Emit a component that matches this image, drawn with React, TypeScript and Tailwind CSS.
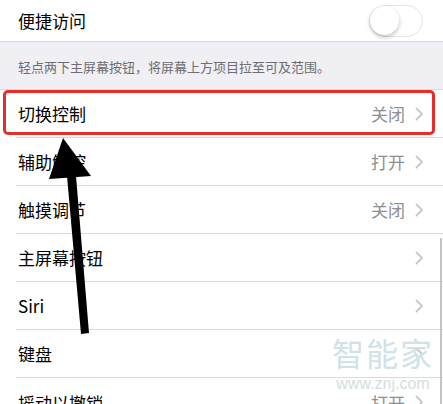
import React from "react";

const Chevron = () => (
  <svg width="9" height="14" viewBox="0 0 9 14" className="ml-[10px]">
    <path d="M1.5 1.5 L7 7 L1.5 12.5" fill="none" stroke="#c7c7cc" strokeWidth="1.8" strokeLinecap="round" strokeLinejoin="round" />
  </svg>
);

const rows: { label: string; value?: string }[] = [
  { label: "切换控制", value: "关闭" },
  { label: "辅助触控", value: "打开" },
  { label: "触摸调节", value: "关闭" },
  { label: "主屏幕按钮" },
  { label: "Siri" },
  { label: "键盘" },
  { label: "摇动以撤销", value: "打开" },
];

export default function App() {
  return (
    <div
      className="relative w-[443px] h-[404px] overflow-hidden bg-[#efeff4]"
      style={{ fontFamily: '"Noto Sans CJK SC", "Noto Sans", sans-serif' }}
    >
      <div className="h-[42px] bg-white flex items-center justify-between pl-[18px] pr-[20px] border-b border-[#d9d9de]">
        <span className="text-[17px] text-black leading-none">便捷访问</span>
        <div className="w-[54px] h-[32px] rounded-full border-[1.5px] border-[#e4e4e6] bg-white relative">
          <div className="absolute left-0 top-0 w-[29px] h-[29px] rounded-full bg-white shadow-[0_2px_4px_rgba(0,0,0,0.25)]" />
        </div>
      </div>
      <div className="h-[47px] pl-[18px] pt-[11px]">
        <span className="text-[13px] text-[#6d6d72] leading-none">轻点两下主屏幕按钮，将屏幕上方项目拉至可及范围。</span>
      </div>
      <div className="bg-white border-t border-[#d9d9de]">
        {rows.map((r, i) => (
          <div key={i} className="pl-[16px]">
            <div className={`h-[48px] flex items-center justify-between pl-[2px] pr-[19px] ${i < rows.length - 1 ? "border-b border-[#d9d9de]" : ""}`}>
              <span className="text-[17px] text-black leading-none">{r.label}</span>
              <div className="flex items-center">
                {r.value && <span className="text-[17px] text-[#8e8e93] leading-none">{r.value}</span>}
                <Chevron />
              </div>
            </div>
          </div>
        ))}
      </div>

      {/* red annotation box */}
      <div className="absolute left-[3px] top-[90px] w-[432px] h-[45px] border-[3px] border-[#e52e2b] rounded-[5px]" />

      {/* scrollbar */}
      <div className="absolute left-[440px] top-[238px] w-[2px] h-[170px] bg-[#c4c4c4]" />

      {/* watermark */}
      <div className="absolute left-[332px] top-[336px] w-[102px] flex flex-col items-center">
        <span className="text-[32px] leading-none tracking-[2px] text-[#cfe2e7]">智能家</span>
        <span className="text-[16px] leading-none mt-[8px] text-[#d4dde0]" style={{ fontFamily: '"Liberation Sans", sans-serif' }}>www.znj.com</span>
      </div>

      {/* arrow */}
      <svg className="absolute left-0 top-0" width="443" height="404" viewBox="0 0 443 404">
        <polygon points="63,138 49,179 91,176" fill="#000" />
        <polygon points="67,176 76,176 89,333 81,334" fill="#000" />
      </svg>
    </div>
  );
}
